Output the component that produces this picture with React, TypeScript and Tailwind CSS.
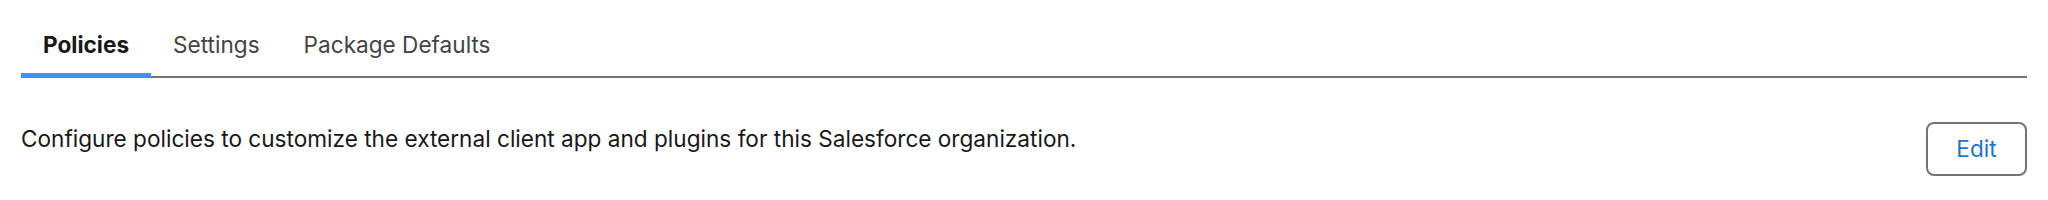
import { useState } from "react";

const tabs = ["Policies", "Settings", "Package Defaults"];

export default function App() {
  const [activo, setActivo] = useState("Policies");

  return (
    <div className="h-[200px] w-full bg-white px-[21px] font-['Inter',sans-serif]">
      <div className="flex border-b-2 border-[#747474]">
        {tabs.map((tab) =>
          tab === activo ? (
            <button
              key={tab}
              onClick={() => setActivo(tab)}
              className="-mb-[2px] border-b-[5px] border-[#468ef0] px-[22px] pt-[28px] pb-[12px] text-[22.6px] leading-[33px] font-bold text-[#181818]"
            >
              {tab}
            </button>
          ) : (
            <button
              key={tab}
              onClick={() => setActivo(tab)}
              className="px-[22px] pt-[28px] pb-[15px] text-[22.6px] leading-[33px] text-[#444444]"
            >
              {tab}
            </button>
          )
        )}
      </div>

      <div className="mt-[44px] flex items-start justify-between">
        <p className="text-[22.6px] leading-[33px] text-[#181818]">
          Configure policies to customize the external client app and plugins for this Salesforce organization.
        </p>
        <button className="flex h-[54px] w-[101px] items-center justify-center rounded-[8px] border-2 border-[#747474] text-[22.6px] text-[#1a73d1]">
          Edit
        </button>
      </div>
    </div>
  );
}
